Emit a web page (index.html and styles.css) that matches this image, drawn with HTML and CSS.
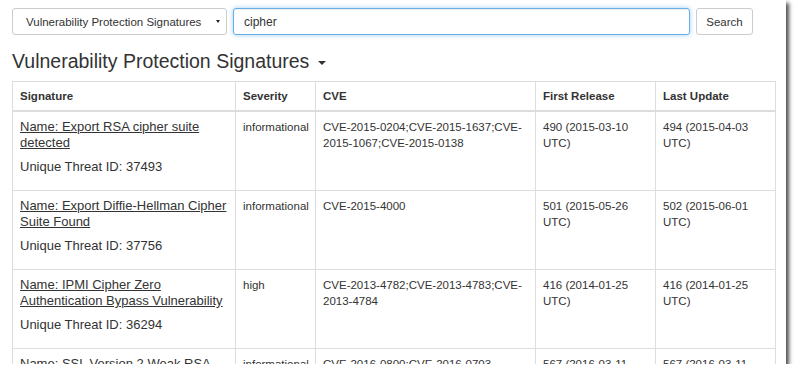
FILE: index.html
```html
<!DOCTYPE html>
<html lang="en">
<head>
  <meta charset="UTF-8">
  <title>Threat Vault Search</title>
  <link rel="stylesheet" href="styles.css">
</head>
<body>

<div class="frame">
  <div class="searchBar">
    <div class="selectBox">
      <span class="selectText">Vulnerability Protection Signatures</span>
      <span class="selectArrow"></span>
    </div>
    <input type="text" class="searchInput" value="cipher">
    <button class="searchButton">Search</button>
  </div>

  <h3 class="title">Vulnerability Protection Signatures <span class="caret"></span></h3>

  <table class="results">
    <colgroup>
      <col class="colSig">
      <col class="colSev">
      <col class="colCve">
      <col class="colDate">
      <col class="colDate">
    </colgroup>
    <thead>
      <tr>
        <th>Signature</th>
        <th>Severity</th>
        <th>CVE</th>
        <th>First Release</th>
        <th>Last Update</th>
      </tr>
    </thead>
    <tbody>
      <tr>
        <td class="sig">
          <p><a href="#">Name: Export RSA cipher suite detected</a></p>
          <p>Unique Threat ID: 37493</p>
        </td>
        <td>informational</td>
        <td>CVE-2015-0204;CVE-2015-1637;CVE-2015-1067;CVE-2015-0138</td>
        <td>490 (2015-03-10 UTC)</td>
        <td>494 (2015-04-03 UTC)</td>
      </tr>
      <tr>
        <td class="sig">
          <p><a href="#">Name: Export Diffie-Hellman Cipher Suite Found</a></p>
          <p>Unique Threat ID: 37756</p>
        </td>
        <td>informational</td>
        <td>CVE-2015-4000</td>
        <td>501 (2015-05-26 UTC)</td>
        <td>502 (2015-06-01 UTC)</td>
      </tr>
      <tr>
        <td class="sig">
          <p><a href="#">Name: IPMI Cipher Zero Authentication Bypass Vulnerability</a></p>
          <p>Unique Threat ID: 36294</p>
        </td>
        <td>high</td>
        <td>CVE-2013-4782;CVE-2013-4783;CVE-2013-4784</td>
        <td>416 (2014-01-25 UTC)</td>
        <td>416 (2014-01-25 UTC)</td>
      </tr>
      <tr>
        <td class="sig">
          <p><a href="#">Name: SSL Version 2 Weak RSA Cipher Suites</a></p>
          <p>Unique Threat ID: 38993</p>
        </td>
        <td>informational</td>
        <td>CVE-2016-0800;CVE-2016-0703</td>
        <td>567 (2016-03-11 UTC)</td>
        <td>567 (2016-03-11 UTC)</td>
      </tr>
    </tbody>
  </table>
</div>

</body>
</html>
```

FILE: styles.css
```css
body {
  margin: 0;
  padding: 0;
  background: #fff;
  font-family: "Liberation Sans", Arial, sans-serif;
  color: #333;
}

/* the captured window, with its drop shadow */
.frame {
  width: 786px;
  height: 364px;
  overflow: hidden;
  background: #fff;
  box-shadow: 3px 3px 4px rgba(0, 0, 0, 0.7);
}

.searchBar {
  display: flex;
  gap: 6px;
  height: 27px;
  margin: 8px 33px 0 12px;
}

.selectBox {
  box-sizing: border-box;
  width: 215px;
  display: flex;
  align-items: center;
  padding: 0 6px 0 13px;
  border: 1px solid #ccc;
  border-radius: 3px;
  font-size: 11.5px;
  color: #333;
}

.selectArrow {
  margin-left: auto;
  width: 0;
  height: 0;
  border-left: 2.5px solid transparent;
  border-right: 2.5px solid transparent;
  border-top: 3.5px solid #222;
}

.searchInput {
  box-sizing: border-box;
  flex: 1;
  min-width: 0;
  height: 27px;
  margin: 0;
  padding: 0 10px;
  border: 1px solid #66afe9;
  border-radius: 3px;
  outline: none;
  box-shadow: inset 0 1px 1px rgba(0, 0, 0, 0.075), 0 0 5px rgba(102, 175, 233, 0.6);
  font-family: inherit;
  font-size: 12px;
  color: #333;
}

.searchButton {
  box-sizing: border-box;
  width: 57px;
  height: 27px;
  margin: 0;
  padding: 0;
  background: #fff;
  border: 1px solid #ccc;
  border-radius: 3px;
  font-family: inherit;
  font-size: 11.5px;
  color: #333;
}

.title {
  margin: 15px 12px 9px;
  font-size: 19.5px;
  font-weight: normal;
  line-height: 22px;
  color: #333;
}

.caret {
  display: inline-block;
  width: 0;
  height: 0;
  margin-left: 3px;
  vertical-align: middle;
  border-left: 4px solid transparent;
  border-right: 4px solid transparent;
  border-top: 4px solid #333;
}

.results {
  margin-left: 12px;
  width: 763px;
  table-layout: fixed;
  border-collapse: collapse;
  font-size: 11.5px;
  line-height: 16px;
}

.colSig { width: 223px; }
.colSev { width: 80px; }
.colCve { width: 220px; }
.colDate { width: 120px; }

.results th,
.results td {
  border: 1px solid #ddd;
  padding: 7px;
  text-align: left;
  vertical-align: top;
}

.results th {
  padding: 6px 7px;
  font-weight: bold;
  border-bottom-width: 2px;
}

.results td.sig {
  font-size: 13px;
}

.sig p {
  margin: 0 0 8px;
}

.sig a {
  color: #333;
  text-decoration: underline;
}
```
